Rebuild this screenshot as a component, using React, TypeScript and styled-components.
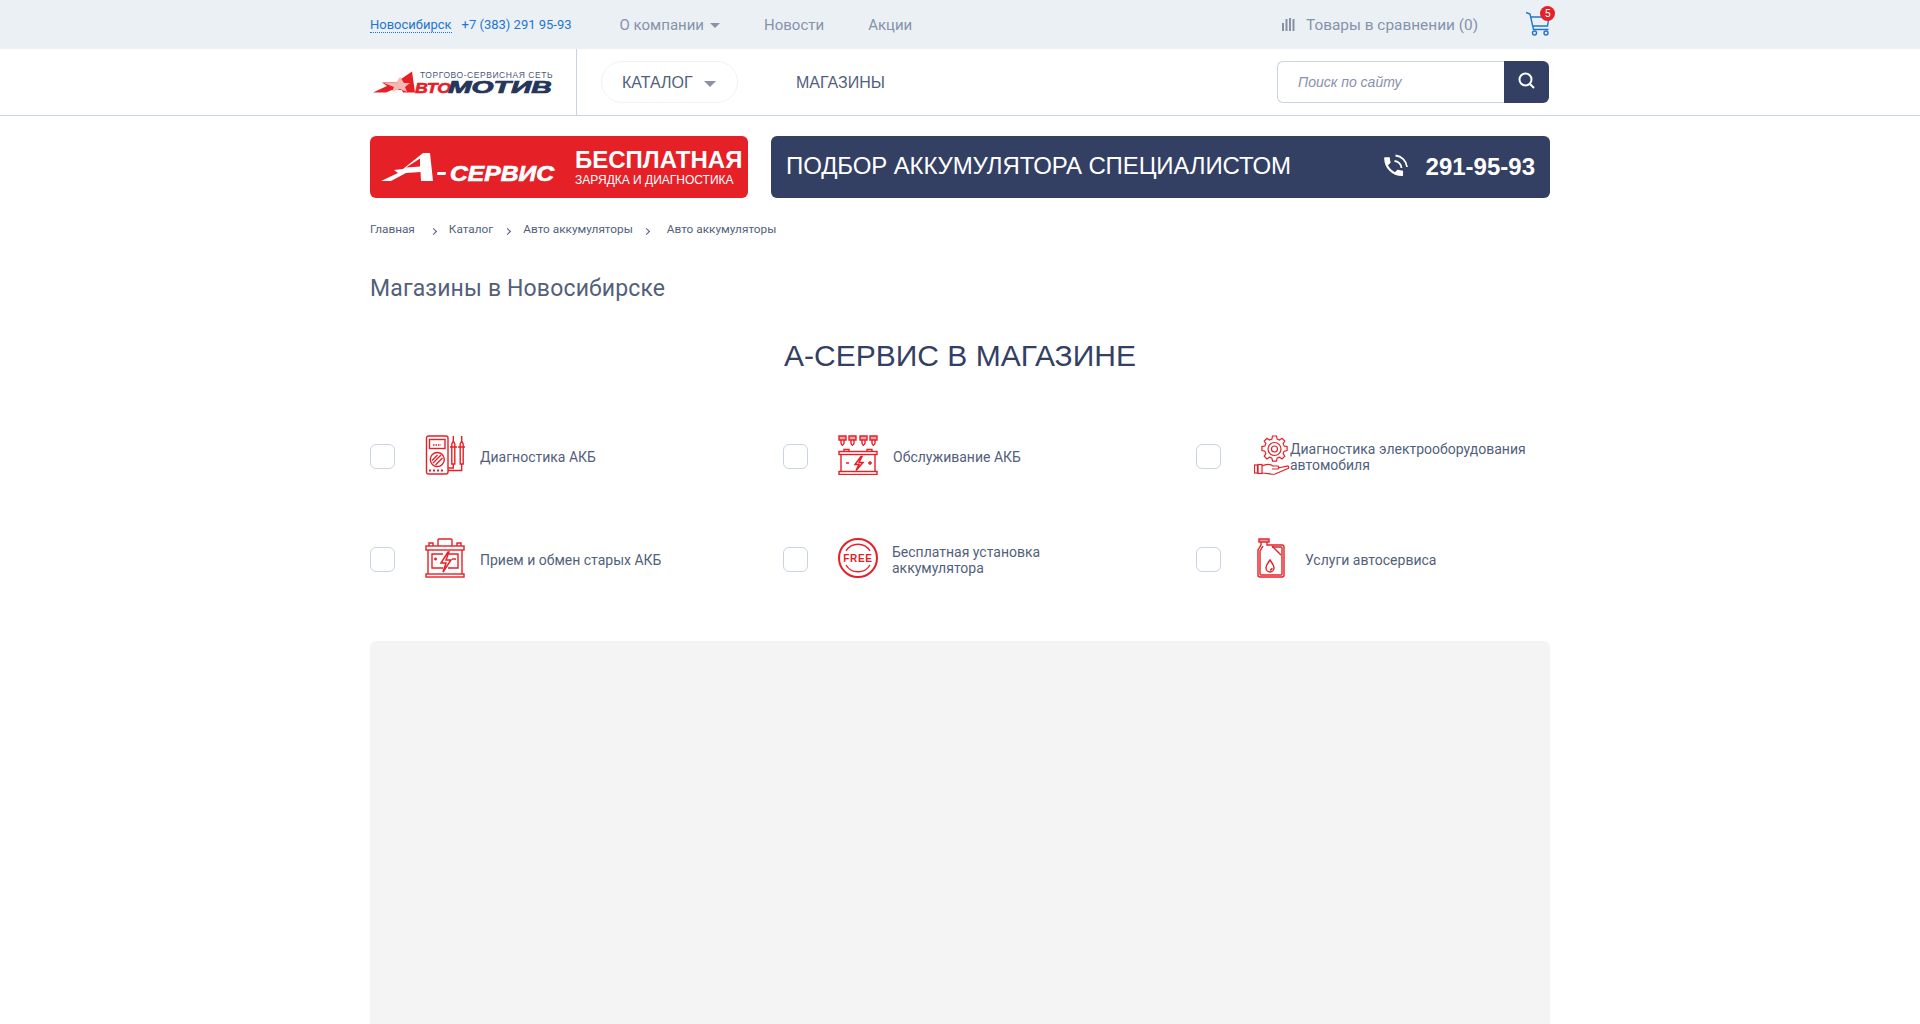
import { ReactNode } from "react";
import styled, { createGlobalStyle } from "styled-components";

const GlobalStyle = createGlobalStyle`
  html, body {
    margin: 0;
    padding: 0;
    background: #fff;
    font-family: Roboto, "Liberation Sans", sans-serif;
    color: #535f7b;
  }
  * {
    box-sizing: border-box;
  }
`;

const Container = styled.div`
  width: 1180px;
  margin: 0 auto;
  display: flex;
  align-items: center;
`;

const TopBar = styled.div`
  height: 49px;
  background: #ebf0f5;
`;

const TopInner = styled(Container)`
  height: 49px;
`;

const CityLink = styled.a`
  font-size: 13px;
  color: #1f76d0;
  border-bottom: 1px dotted #1f76d0;
  line-height: 15px;
  margin-right: 10px;
`;

const Phone = styled.a`
  font-size: 13px;
  color: #1f76d0;
  width: 158px;
`;

const TopLink = styled.a`
  font-size: 15px;
  color: #8792ab;
  display: flex;
  align-items: center;
  gap: 6px;
  margin-right: 44px;
`;

const Caret = styled.span<{ $size?: number }>`
  display: inline-block;
  width: 0;
  height: 0;
  margin-top: 2px;
  border-left: ${(p) => p.$size ?? 5}px solid transparent;
  border-right: ${(p) => p.$size ?? 5}px solid transparent;
  border-top: ${(p) => p.$size ?? 5}px solid #8a90a6;
`;

const TopRight = styled.div`
  margin-left: auto;
  display: flex;
  align-items: center;
`;

const Compare = styled.a`
  font-size: 15.4px;
  color: #8792ab;
  display: flex;
  align-items: center;
  gap: 11px;
  margin-right: 48px;
`;

const CartWrap = styled.div`
  position: relative;
  width: 24px;
  height: 26px;
  margin-top: -2px;
`;

const CartBadge = styled.span`
  position: absolute;
  top: -5px;
  right: -5px;
  width: 15px;
  height: 15px;
  border-radius: 50%;
  background: #e52027;
  color: #fff;
  font-size: 11px;
  line-height: 15px;
  text-align: center;
`;

const Header = styled.div`
  height: 67px;
  border-bottom: 1px solid #c9d3e2;
`;

const HeaderInner = styled(Container)`
  height: 66px;
`;

const LogoBox = styled.div`
  width: 207px;
  height: 66px;
  border-right: 1px solid #c9d3e2;
  display: flex;
  align-items: center;
`;

const CatalogButton = styled.a`
  margin-left: 24px;
  width: 137px;
  height: 42px;
  border: 1px solid #f1f2f5;
  border-radius: 21px;
  display: flex;
  align-items: center;
  gap: 11px;
  padding: 1px 0 0 20px;
  font-family: "Liberation Sans", sans-serif;
  font-size: 16px;
  color: #535f7b;
`;

const MenuLink = styled.a`
  margin: 1px 0 0 58px;
  font-family: "Liberation Sans", sans-serif;
  font-size: 16px;
  color: #535f7b;
`;

const SearchForm = styled.div`
  margin: 0 1px 0 auto;
  display: flex;
  width: 272px;
  height: 42px;
`;

const SearchInput = styled.input`
  width: 227px;
  height: 42px;
  border: 1px solid #c9d3e2;
  border-right: none;
  border-radius: 6px 0 0 6px;
  padding: 0 20px;
  outline: none;
  font-family: "Liberation Sans", sans-serif;
  font-size: 14px;
  font-style: italic;
  &::placeholder {
    color: #8792ab;
    opacity: 1;
  }
`;

const SearchButton = styled.button`
  width: 45px;
  height: 42px;
  border: none;
  border-radius: 0 6px 6px 0;
  background: #334063;
  display: flex;
  align-items: center;
  justify-content: center;
  padding: 0 0 3px;
`;

const Banners = styled(Container)`
  margin-top: 20px;
  gap: 23px;
`;

const Banner = styled.div<{ $bg: string }>`
  height: 62px;
  background: ${(p) => p.$bg};
  border-radius: 6px;
  display: flex;
  align-items: center;
  color: #fff;
  font-family: "Liberation Sans", sans-serif;
`;

const RedBanner = styled(Banner)`
  width: 378px;
  padding-left: 9px;
  flex: none;
`;

const BlueBanner = styled(Banner)`
  flex: 1;
  padding: 0 15px;
`;

const RedText = styled.div`
  margin-left: 18px;
  display: flex;
  flex-direction: column;
  margin-top: -2px;
`;

const RedTitle = styled.span`
  font-size: 24px;
  font-weight: 700;
  line-height: 27px;
  white-space: nowrap;
`;

const RedSub = styled.span`
  font-size: 12px;
  line-height: 14px;
  white-space: nowrap;
`;

const BlueTitle = styled.span`
  font-size: 24px;
  letter-spacing: -0.12px;
  margin-top: -2px;
`;

const BluePhone = styled.span`
  margin-left: auto;
  display: flex;
  align-items: center;
  gap: 18px;
  font-size: 24px;
  font-weight: 700;
`;

const Crumbs = styled(Container)`
  margin-top: 22px;
  height: 18px;
  font-size: 11.8px;
  color: #535f7b;
`;

const Crumb = styled.a`
  white-space: nowrap;
`;

const CrumbSep = styled.span<{ $l: number; $r: number }>`
  width: 5px;
  height: 5px;
  margin: 4px ${(p) => p.$r}px 0 ${(p) => p.$l}px;
  border-top: 1px solid #535f7b;
  border-right: 1px solid #535f7b;
  transform: rotate(45deg);
`;

const PageTitle = styled.h1`
  width: 1180px;
  margin: 36px auto 0;
  font-size: 23px;
  font-weight: 400;
  line-height: 30px;
  letter-spacing: 0.15px;
  color: #535f7b;
`;

const SectionTitle = styled.h2`
  margin: 34px 0 0;
  text-align: center;
  font-family: "Liberation Sans", sans-serif;
  font-size: 30px;
  font-weight: 400;
  line-height: 36px;
  color: #334063;
`;

const ServiceGrid = styled.div`
  width: 1180px;
  margin: 61px auto 0;
  display: grid;
  grid-template-columns: repeat(3, 413px);
  grid-auto-rows: 103px;
  margin-right: auto;
`;

const Service = styled.label`
  display: flex;
  align-items: flex-start;
`;

const Check = styled.span`
  flex: none;
  width: 25px;
  height: 25px;
  margin-top: 9px;
  border: 1px solid #c9d3e2;
  border-radius: 6px;
`;

const ServiceIcon = styled.span<{ $mr: number; $w?: number; $ml?: number }>`
  flex: none;
  display: block;
  width: ${(p) => p.$w ?? 40}px;
  height: 40px;
  margin-left: ${(p) => p.$ml ?? 30}px;
  margin-right: ${(p) => p.$mr}px;
`;

const ServiceText = styled.span`
  height: 40px;
  margin-top: 2px;
  display: flex;
  align-items: center;
  font-size: 14px;
  line-height: 16px;
  color: #535f7b;
`;

const MapPanel = styled.div`
  width: 1180px;
  height: 420px;
  margin: 0 auto;
  background: #f4f4f4;
  border-radius: 6px;
`;

const PageClip = styled.div`
  height: 1024px;
  overflow: hidden;
`;

const AvtomotivLogo = () => (
  <svg width="186" height="26" viewBox="0 0 186 26">
    <polygon points="3,23.500 17,17 12,13.500 26,13.500 42,2.500 45,23.500 33,23.500 32,21 22,21 16,23.500" fill="#e52027" />
    <polygon points="14,14 26,14 30,8 34,14 40,14 35,18 37,23 30,20 22,23 24,18" fill="#f4b9b2" />
    <text
      transform="translate(50 9)"
      fontFamily="Liberation Sans"
      fontSize="8.500"
      letterSpacing="0.55"
      fill="#4b5674"
    >
      ТОРГОВО-СЕРВИСНАЯ СЕТЬ
    </text>
    <text
      transform="translate(45 23.500) scale(1.180 1)"
      fontFamily="Liberation Sans"
      fontSize="15"
      fontWeight="700"
      fontStyle="italic"
      fill="#e52027"
      stroke="#e52027"
      strokeWidth="0.6"
    >
      ВТО
    </text>
    <text
      transform="translate(78 23.500) scale(1.770 1)"
      fontFamily="Liberation Sans"
      fontSize="16"
      fontWeight="700"
      fontStyle="italic"
      fill="#263659"
      stroke="#263659"
      strokeWidth="0.7"
    >
      МОТИВ
    </text>
  </svg>
);

const AServiceLogo = () => (
  <svg width="178" height="36" viewBox="0 0 178 36">
    <polygon points="2,32 19,24 15,21 24,20 44,4 51,4 54,32 42,32 41.500,23 27,24 12,32" fill="#fff" />
    <polygon points="27,18.500 41,9.500 41,17.500" fill="#e52027" />
    <polygon points="58.500,23 67,23 66.500,26 58,26" fill="#fff" />
    <text
      transform="translate(71 31.500) scale(1.120 1)"
      fontFamily="Liberation Sans"
      fontSize="22"
      fontWeight="700"
      fontStyle="italic"
      fill="#fff"
      stroke="#fff"
      strokeWidth="0.7"
    >
      СЕРВИС
    </text>
  </svg>
);

const PhoneIcon = () => (
  <svg width="26" height="26" viewBox="0 0 26 26" fill="none">
    <g transform="translate(-1 0) scale(1.050)">
      <path
        d="M6.600 10.800c1.400 2.800 3.800 5.100 6.600 6.600l2.200-2.200c.3-.3.700-.4 1-.2 1.100.4 2.300.6 3.600.6.600 0 1 .4 1 1V20c0 .6-.4 1-1 1C10.600 21 3 13.400 3 4c0-.6.4-1 1-1h3.500c.6 0 1 .4 1 1 0 1.300.2 2.500.6 3.600.1.300 0 .7-.2 1l-2.300 2.200z"
        fill="#fff"
      />
    </g>
    <path d="M13.500 1.500A13 13 0 0 1 25 13M12.500 7a7.500 7.500 0 0 1 7 7" stroke="#fff" strokeWidth="1.800" />
  </svg>
);

const CompareIcon = () => (
  <svg width="13" height="13" viewBox="0 0 13 13" fill="#8a90a6">
    <rect x="0" y="5" width="2" height="8" />
    <rect x="3.500" y="1" width="2" height="12" />
    <rect x="7" y="0" width="2" height="13" />
    <rect x="10.500" y="1" width="2" height="12" />
  </svg>
);

const CartIcon = () => (
  <svg width="24" height="26" viewBox="0 0 24 26" fill="none" stroke="#1f76d0" strokeWidth="1.400">
    <path d="M0 1.500l4 1.500 3.500 15.500h15" />
    <path d="M4.500 6H23l-1.500 9H7" />
    <circle cx="8.500" cy="22" r="2" />
    <circle cx="20" cy="22" r="2" />
  </svg>
);

const SearchGlyph = () => (
  <svg width="17" height="17" viewBox="0 0 17 17" fill="none" stroke="#fff" strokeWidth="2">
    <circle cx="7.500" cy="7.500" r="6" />
    <path d="M12 12l4 4" />
  </svg>
);

const iconLine = {
  fill: "none",
  stroke: "#e52027",
  strokeWidth: 1.4,
};

const MeterIcon = () => (
  <svg width="40" height="40" viewBox="0 0 40 40" {...iconLine}>
    <rect x="1.500" y="1" width="21.500" height="38" rx="2" />
    <rect x="4.500" y="4.500" width="15.500" height="9" />
    <path d="M8 10h8" strokeDasharray="1.500 1" />
    <circle cx="12.300" cy="24.500" r="7" />
    <path d="M8 28l8-8M10.500 30l7-7M7 25.500l5.500-5.500" />
    <path d="M4 35.500h16" strokeDasharray="2 2" strokeWidth="1.800" />
    <path d="M28.300 1v5l-1.500 3v20h3V9l-1.500-3M36.700 1v5l-1.500 3v20h3V9l-1.500-3" />
    <path d="M25 12h7M33 12h7" />
    <path d="M28.300 29v4h-5M36.700 29v6.500h-13.700" />
  </svg>
);

const BatteryIcon = () => (
  <svg width="40" height="40" viewBox="0 0 40 40" {...iconLine}>
    <path d="M13 8V2a1 1 0 0 1 1-1h12a1 1 0 0 1 1 1v6M4 8V5h4v3M32 8V5h4v3" />
    <rect x="1" y="8" width="38" height="4" />
    <path d="M3 12v24M37 12v24" />
    <rect x="1" y="36" width="38" height="3" />
    <path d="M18 16h-11v14h11M24 16h9v14h-10" />
    <path d="M23 14l-7 11h5l-3 9 8-12h-5l3-8z" strokeWidth="1.500" />
    <path d="M9 21h3M10.500 19.500v3M27 21h4" />
  </svg>
);

const ServiceBatteryIcon = () => (
  <svg width="40" height="40" viewBox="0 0 40 40" {...iconLine}>
    <path d="M1 1h7v4H1zM11 1h7v4h-7zM22 1h7v4h-7zM32 1h7v4h-7z" fill="#f4a5a8" />
    <path d="M3 5v3c0 1.500 1.500 1.500 1.500 3M13 5v3c0 1.500 1.500 1.500 1.500 3M24 5v3c0 1.500 1.500 1.500 1.500 3M34 5v3c0 1.500 1.500 1.500 1.500 3" />
    <path d="M6 5v3c0 1-1 1.500-1 2M16 5v3c0 1-1 1.500-1 2M27 5v3c0 1-1 1.500-1 2M37 5v3c0 1-1 1.500-1 2" />
    <path d="M6 16.500v-2h5v2M29 16.500v-2h5v2" />
    <rect x="1" y="16.500" width="38" height="3" />
    <path d="M3 19.500v17M37 19.500v17" />
    <rect x="1" y="36.500" width="38" height="3" />
    <path d="M8 28h3M30 28h4M32 26v4" />
    <path d="M23 21.500l-6 8h4l-3 6 7-8h-4l3-6z" strokeWidth="1.500" />
  </svg>
);

const FreeIcon = () => (
  <svg width="40" height="40" viewBox="0 0 40 40" fill="none" stroke="#e52027" strokeWidth="2">
    <circle cx="20" cy="20" r="19" />
    <path d="M8 13a14 14 0 0 1 24 0M32 27a14 14 0 0 1-24 0" strokeWidth="1.400" />
    <text
      x="20"
      y="24"
      textAnchor="middle"
      fontFamily="Liberation Sans"
      fontWeight="700"
      fontSize="10"
      letterSpacing="0.7"
      fill="#e52027"
      stroke="none"
    >
      FREE
    </text>
  </svg>
);

const GearHandIcon = () => (
  <svg width="36" height="40" viewBox="0 0 36 40" fill="none" stroke="#e52027" strokeWidth="1.200">
    <g transform="translate(-1.500 0)">
      <path d="M20 1h4l.6 3 2.400 1 2.500-1.700 2.800 2.800-1.700 2.500 1 2.400 3 .6v4l-3 .6-1 2.400 1.700 2.500-2.800 2.800-2.500-1.700-2.400 1-.6 3h-4l-.6-3-2.400-1-2.500 1.700-2.800-2.800 1.700-2.500-1-2.400-3-.6v-4l3-.6 1-2.400-1.700-2.500 2.800-2.800 2.500 1.700 2.400-1z" />
      <circle cx="22" cy="14" r="6.500" />
      <circle cx="22" cy="14" r="3" />
    </g>
    <rect x="0.500" y="30" width="3" height="8" />
    <rect x="4" y="29.500" width="4" height="9" />
    <path d="M8 31c4-2 8-2 11 0h5c1 1 1 2 0 3h-6M24 33l10-2c1 1 1 2 0 2.500L21 39c-4 1-8-1-13-1" />
  </svg>
);

const CanisterIcon = () => (
  <svg width="28" height="40" viewBox="0 0 28 40" {...iconLine}>
    <rect x="2" y="1" width="10" height="3" fill="#f4a5a8" />
    <path d="M4 4v3L1 12v25a2 2 0 0 0 2 2h22a2 2 0 0 0 2-2V9a2 2 0 0 0-2-2H10V4" />
    <path d="M6 8L3 13v23a1 1 0 0 0 1 1h20a1 1 0 0 0 1-1V10a1 1 0 0 0-1-1H15" />
    <path d="M15 8l9 9" />
    <path d="M13 22c-2 3-4 5-4 8a4 4 0 0 0 8 0c0-3-2-5-4-8z" />
    <path d="M13 32a2 2 0 0 0 2-2" />
  </svg>
);

const services: { label: ReactNode; icon: ReactNode; mr: number; w?: number; ml?: number }[] = [
  { label: "Диагностика АКБ", icon: <MeterIcon />, mr: 15 },
  { label: "Обслуживание АКБ", icon: <ServiceBatteryIcon />, mr: 15 },
  {
    label: (
      <>
        Диагностика электрооборудования
        <br />
        автомобиля
      </>
    ),
    icon: <GearHandIcon />,
    mr: 0,
    w: 36,
    ml: 33,
  },
  { label: "Прием и обмен старых АКБ", icon: <BatteryIcon />, mr: 15 },
  {
    label: (
      <>
        Бесплатная установка
        <br />
        аккумулятора
      </>
    ),
    icon: <FreeIcon />,
    mr: 14,
  },
  { label: "Услуги автосервиса", icon: <CanisterIcon />, mr: 20, w: 28, ml: 36 },
];

const App = () => (
  <PageClip>
    <GlobalStyle />
    <TopBar>
      <TopInner>
        <CityLink>Новосибирск</CityLink>
        <Phone>+7 (383) 291 95-93</Phone>
        <TopLink>
          О компании <Caret />
        </TopLink>
        <TopLink>Новости</TopLink>
        <TopLink>Акции</TopLink>
        <TopRight>
          <Compare>
            <CompareIcon />
            Товары в сравнении (0)
          </Compare>
          <CartWrap>
            <CartIcon />
            <CartBadge>5</CartBadge>
          </CartWrap>
        </TopRight>
      </TopInner>
    </TopBar>
    <Header>
      <HeaderInner>
        <LogoBox>
          <AvtomotivLogo />
        </LogoBox>
        <CatalogButton>
          КАТАЛОГ <Caret $size={6} />
        </CatalogButton>
        <MenuLink>МАГАЗИНЫ</MenuLink>
        <SearchForm>
          <SearchInput placeholder="Поиск по сайту" />
          <SearchButton>
            <SearchGlyph />
          </SearchButton>
        </SearchForm>
      </HeaderInner>
    </Header>
    <Banners>
      <RedBanner $bg="#e52027">
        <AServiceLogo />
        <RedText>
          <RedTitle>БЕСПЛАТНАЯ</RedTitle>
          <RedSub>ЗАРЯДКА И ДИАГНОСТИКА</RedSub>
        </RedText>
      </RedBanner>
      <BlueBanner $bg="#334063">
        <BlueTitle>ПОДБОР АККУМУЛЯТОРА СПЕЦИАЛИСТОМ</BlueTitle>
        <BluePhone>
          <PhoneIcon />
          291-95-93
        </BluePhone>
      </BlueBanner>
    </Banners>
    <Crumbs>
      <Crumb>Главная</Crumb>
      <CrumbSep $l={16} $r={13} />
      <Crumb>Каталог</Crumb>
      <CrumbSep $l={12} $r={13} />
      <Crumb>Авто аккумуляторы</Crumb>
      <CrumbSep $l={11} $r={18} />
      <Crumb>Авто аккумуляторы</Crumb>
    </Crumbs>
    <PageTitle>Магазины в Новосибирске</PageTitle>
    <SectionTitle>А-СЕРВИС В МАГАЗИНЕ</SectionTitle>
    <ServiceGrid>
      {services.map((s, i) => (
        <Service key={i}>
          <Check />
          <ServiceIcon $mr={s.mr} $w={s.w} $ml={s.ml}>
            {s.icon}
          </ServiceIcon>
          <ServiceText>{s.label}</ServiceText>
        </Service>
      ))}
    </ServiceGrid>
    <MapPanel />
  </PageClip>
);

export default App;
